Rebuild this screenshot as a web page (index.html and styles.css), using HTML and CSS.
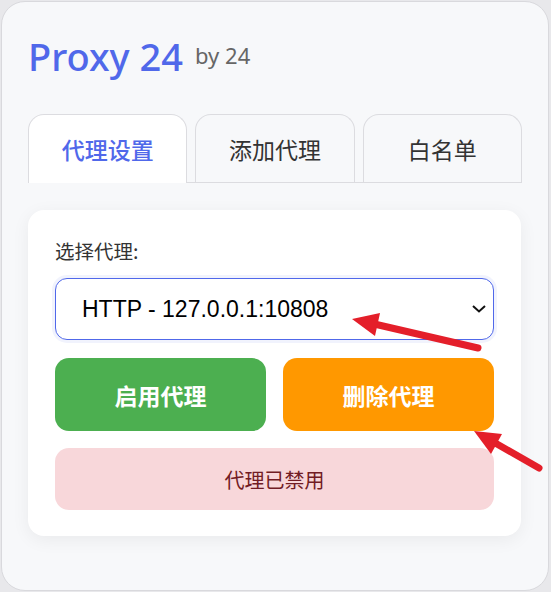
FILE: index.html
```html
<!DOCTYPE html>
<html lang="zh-CN">
<head>
<meta charset="utf-8">
<title>Proxy 24</title>
<link rel="stylesheet" href="styles.css">
</head>
<body>
<div class="panel">
  <h1 class="title">Proxy 24 <span class="by">by 24</span></h1>
  <div class="tabs">
    <div class="tab active">代理设置</div>
    <div class="tab">添加代理</div>
    <div class="tab">白名单</div>
  </div>
  <div class="card">
    <label class="label" for="proxy">选择代理:</label>
    <div class="select-wrap">
      <select id="proxy" class="select">
        <option>HTTP - 127.0.0.1:10808</option>
      </select>
      <svg class="chev" width="14" height="8" viewBox="0 0 14 8"><path d="M1 1 L7 6.5 L13 1" fill="none" stroke="#111" stroke-width="2"/></svg>
    </div>
    <div class="buttons">
      <button class="btn green">启用代理</button>
      <button class="btn orange">删除代理</button>
    </div>
    <div class="status">代理已禁用</div>
  </div>
</div>
<svg class="arrows" width="551" height="592" viewBox="0 0 551 592">
  <g stroke="#e41f2a" stroke-width="7" stroke-linecap="round" fill="#e41f2a">
    <line x1="478" y1="348" x2="370" y2="323"/>
    <line x1="539" y1="468" x2="490" y2="440"/>
  </g>
  <g fill="#e41f2a">
    <polygon points="352,319 380,313 375,336"/>
    <polygon points="474,431 502,434 491,454"/>
  </g>
</svg>
</body>
</html>
```

FILE: styles.css
```css
html, body {
  margin: 0;
  padding: 0;
}
body {
  background: #e8e8eb;
  width: 551px;
  height: 592px;
  overflow: hidden;
  position: relative;
  font-family: "Noto Sans", "Noto Sans CJK SC", sans-serif;
}
.panel {
  box-sizing: border-box;
  margin: 1px 2px 1px 1px;
  width: 548px;
  height: 590px;
  border: 1px solid #d9d9dd;
  border-radius: 24px;
  background: #f7f8fa;
  padding: 32px 27px 0 26px;
}
.title {
  margin: 0;
  display: flex;
  align-items: center;
  gap: 12px;
  font-size: 38px;
  line-height: 44px;
  font-weight: 500;
  color: #5068ea;
}
.by {
  font-size: 22px;
  line-height: 24px;
  font-weight: 400;
  color: #666;
  margin-top: -2px;
}
.tabs {
  margin-top: 36px;
  display: grid;
  grid-template-columns: repeat(3, 1fr);
  gap: 8px;
  border-bottom: 1px solid #dcdce0;
  width: 494px;
}
.tab {
  height: 67px;
  border: 1px solid #dcdce0;
  border-bottom: none;
  border-radius: 16px 16px 0 0;
  display: flex;
  align-items: center;
  justify-content: center;
  font-family: "Noto Sans CJK SC", sans-serif;
  font-size: 23px;
  color: #333;
}
.tab.active {
  background: #fff;
  color: #5068ea;
  font-weight: 500;
  margin-bottom: -1px;
  height: 68px;
}
.card {
  margin-top: 27px;
  width: 493px;
  box-sizing: border-box;
  background: #fff;
  border-radius: 16px;
  box-shadow: 0 4px 18px rgba(0, 0, 0, 0.06);
  padding: 26px 27px 26px 27px;
}
.label {
  display: block;
  font-family: "Noto Sans CJK SC", sans-serif;
  font-size: 19.5px;
  line-height: 30px;
  color: #333;
  margin-bottom: 12px;
}
.select-wrap {
  position: relative;
}
.select {
  appearance: none;
  -webkit-appearance: none;
  display: block;
  width: 100%;
  height: 62px;
  box-sizing: border-box;
  border: 1px solid #5068ea;
  border-radius: 12px;
  box-shadow: 0 0 0 3px rgba(80, 104, 234, 0.08);
  background: #fff;
  padding: 0 40px 0 26px;
  font-family: "Liberation Sans", Arial, sans-serif;
  font-size: 23px;
  color: #000;
  outline: none;
}
.chev {
  position: absolute;
  right: 8px;
  top: 27px;
}
.buttons {
  margin-top: 18px;
  display: grid;
  grid-template-columns: 1fr 1fr;
  gap: 17px;
}
.btn {
  height: 73px;
  border: none;
  border-radius: 14px;
  color: #fff;
  font-family: "Noto Sans CJK SC", sans-serif;
  font-size: 23px;
  font-weight: 700;
}
.green { background: #4caf50; }
.orange { background: #ff9800; }
.status {
  margin-top: 17px;
  height: 62px;
  border-radius: 14px;
  background: #f8d7da;
  color: #721c24;
  display: flex;
  align-items: center;
  justify-content: center;
  font-family: "Noto Sans CJK SC", sans-serif;
  font-size: 20px;
}
.arrows {
  position: absolute;
  left: 0;
  top: 0;
  pointer-events: none;
}
```
